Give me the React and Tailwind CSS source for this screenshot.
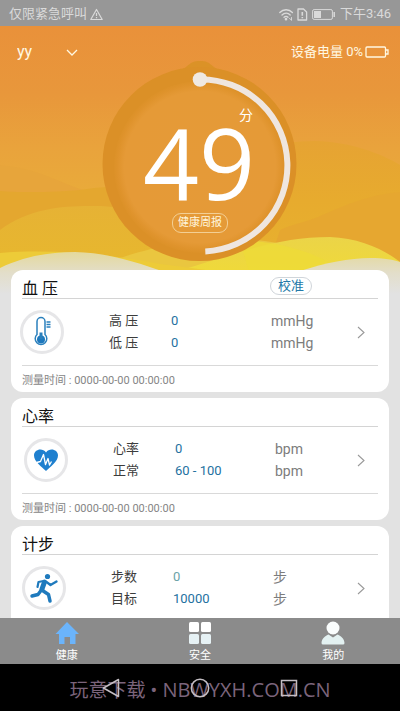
import React from "react";

function StatusBar() {
  return (
    <header className="flex h-[26px] shrink-0 items-center justify-between bg-[#979797] px-[9px] pt-[2px] text-[13px] leading-4 text-[#dadada]">
      <div className="flex items-center gap-[3px]">
        <span>仅限紧急呼叫</span>
        <svg width="13" height="13" viewBox="0 0 13 13" fill="none" stroke="currentColor" strokeWidth="1.2" strokeLinejoin="round">
          <path d="M6.500 1.500 L12.200 11.500 H0.800 Z" />
          <path d="M6.500 5 V8 M6.500 9 V10.200" />
        </svg>
      </div>
      <div className="flex items-center">
        <svg width="15" height="13" viewBox="0 0 15 13" fill="none" stroke="currentColor" strokeWidth="1.300" strokeLinecap="round">
          <path d="M0.800 4.500 C4.200 0.800 10 0.800 13.400 4.500" />
          <path d="M3 7 C5.400 4.500 8.900 4.500 11.200 7" />
          <path d="M5 9.300 C6.300 8 7.800 8 9 9.300" />
          <circle cx="7" cy="11.200" r="0.700" fill="currentColor" />
          <path d="M10.500 10.500 L12.500 12 M12.500 9.500 V12" strokeWidth="0.900" />
        </svg>
        <svg className="ml-[3px]" width="11" height="13" viewBox="0 0 11 13" fill="none" stroke="currentColor" strokeWidth="1.300" strokeLinejoin="round">
          <path d="M1 1 H6.500 L9.600 4 V12 H1 Z" />
          <path d="M5.300 4 V7.800 M5.300 9 V10.300" strokeWidth="1.600" />
        </svg>
        <svg className="ml-1" width="24" height="11" viewBox="0 0 24 11" fill="none" stroke="currentColor">
          <rect x="0.600" y="0.600" width="19.800" height="9.800" rx="1.500" />
          <rect x="2" y="2" width="7" height="7" fill="currentColor" stroke="none" />
          <path d="M22.200 3 V8" strokeWidth="1.500" />
        </svg>
        <span className="ml-1">下午3:46</span>
      </div>
    </header>
  );
}

function WaveBackground() {
  return (
    <svg className="absolute inset-x-0 top-0 h-[270px] w-full" viewBox="0 26 400 270" preserveAspectRatio="none" aria-hidden="true">
      <defs>
        <linearGradient id="sky" x1="0" y1="26" x2="0" y2="296" gradientUnits="userSpaceOnUse">
          <stop offset="0" stopColor="#e9913a" />
          <stop offset="0.250" stopColor="#e8973b" />
          <stop offset="0.450" stopColor="#e9a33c" />
          <stop offset="0.650" stopColor="#e9ac3a" />
          <stop offset="1" stopColor="#e8b62f" />
        </linearGradient>
        <linearGradient id="amber" x1="0" y1="141" x2="0" y2="260" gradientUnits="userSpaceOnUse">
          <stop offset="0" stopColor="#e6a333" />
          <stop offset="0.500" stopColor="#e7ab2e" />
          <stop offset="1" stopColor="#e8b12e" />
        </linearGradient>
        <linearGradient id="gold" x1="0" y1="205" x2="0" y2="260" gradientUnits="userSpaceOnUse">
          <stop offset="0" stopColor="#e6b235" />
          <stop offset="1" stopColor="#e7b72e" />
        </linearGradient>
        <linearGradient id="lemon" x1="0" y1="237" x2="0" y2="275" gradientUnits="userSpaceOnUse">
          <stop offset="0" stopColor="#ebd448" />
          <stop offset="1" stopColor="#f0da38" />
        </linearGradient>
        <linearGradient id="mist" x1="0" y1="252" x2="0" y2="294" gradientUnits="userSpaceOnUse">
          <stop offset="0" stopColor="#e4d99c" />
          <stop offset="0.500" stopColor="#e3deca" />
          <stop offset="1" stopColor="#e2e2e2" />
        </linearGradient>
      </defs>
      <rect y="26" width="400" height="270" fill="url(#sky)" />
      <path d="M0 165 C35 168 55 180 80 189 C120 202 180 205 220 205 V296 H0 Z" fill="#e7a53b" />
      <path d="M200 180 C240 150 280 141 315 141 C350 142 380 153 400 165 V296 H200 Z" fill="url(#amber)" />
      <path d="M0 191 C20 193 60 192 80 190 C100 187 115 186 130 186 C180 190 220 210 260 230 V296 H0 Z" fill="#e4a72f" />
      <path d="M400 192 C370 194 340 207 318 217 C305 222 290 225 280 230 L270 260 L300 296 H400 Z" fill="#e6a730" />
      <path d="M0 230 C28 209 60 206 90 206 C120 205 160 212 250 250 V296 H0 Z" fill="url(#gold)" />
      <path d="M115 260 C145 248 190 240 240 239 C280 240 320 252 340 270 H115 Z" fill="#eac63f" />
      <path d="M150 278 C220 262 265 237 330 237 C360 238 385 250 400 262 V296 H150 Z" fill="url(#lemon)" />
      <path d="M240 241 C270 240 310 250 335 266 L250 275 Z" fill="#eedc36" opacity="0.700" />
      <path d="M0 253 C50 249 110 254 160 264 C190 268 220 271 240 276 V296 H0 Z" fill="#edcb38" />
      <path d="M0 268 C25 256 50 252 75 252 C110 253 135 262 165 272 V296 H0 Z" fill="url(#mist)" />
      <path d="M300 271 C325 263 350 258 370 258 C384 258 394 260 400 262 V296 H300 Z" fill="url(#mist)" />
      <rect y="274" width="400" height="22" fill="url(#mist)" opacity="0.500" />
    </svg>
  );
}

function ScoreGauge() {
  return (
    <div className="mx-auto grid w-[200px] justify-items-center">
      <svg className="col-start-1 row-start-1" width="200" height="202" viewBox="100 60 200 202" aria-hidden="true">
        <defs>
          <radialGradient id="disc" cx="200" cy="167" r="86" gradientUnits="userSpaceOnUse">
            <stop offset="0" stopColor="#e59a38" />
            <stop offset="0.880" stopColor="#e59a37" />
            <stop offset="0.960" stopColor="#df932c" />
            <stop offset="1" stopColor="#dc9128" />
          </radialGradient>
        </defs>
        <path d="M180 70 C190 67 188 61 200 61 C212 61 210 67 220 70 L225 82 H175 Z" fill="#db9227" />
        <circle cx="199.500" cy="164" r="97" fill="#db9027" />
        <circle cx="200" cy="167" r="86" fill="url(#disc)" />
        <path d="M200 79.500 A86 86 0 0 1 205.300 251.400" fill="none" stroke="#efe6df" strokeWidth="6" />
        <circle cx="200" cy="79.500" r="7.300" fill="#efe9e2" />
      </svg>
      <div className="col-start-1 row-start-1 flex w-full flex-col items-center pt-[46px] text-white">
        <span className="w-full pr-[47px] text-right text-[14px] leading-[18px]">分</span>
        <strong className="pr-[2px] font-['Open_Sans'] text-[98px] font-normal leading-[76px]">49</strong>
        <button className="mt-[13px] h-5 w-14 rounded-[9px] border border-[#f3cf94] text-[11px] leading-[18px] text-[#fff6dd]">健康周报</button>
      </div>
    </div>
  );
}

function Hero() {
  return (
    <section className="h-[244px]">
      <div className="relative flex h-[38px] items-end justify-between pl-[17px] pr-[11px] text-[#fff8e2]">
        <label className="grid h-6 w-[61px] items-center">
          <span className="sr-only">用户</span>
          <select className="col-start-1 row-start-1 w-full appearance-none bg-transparent text-[16px] leading-5 outline-none">
            <option>yy</option>
          </select>
          <svg className="pointer-events-none col-start-1 row-start-1 justify-self-end" width="12" height="7" viewBox="0 0 12 7" fill="none" stroke="currentColor" strokeWidth="1.300">
            <path d="M1 1 L6 6 L11 1" />
          </svg>
        </label>
        <div className="flex h-6 items-center gap-[2px] text-[13px] leading-4">
          <span>设备电量 0%</span>
          <svg width="24" height="12" viewBox="0 0 24 12" fill="none" stroke="currentColor" strokeWidth="1.300">
            <rect x="1" y="1" width="19.500" height="10" rx="1" />
            <path d="M20.500 4 H23 V8 H20.500" />
          </svg>
        </div>
      </div>
      <div className="relative -mt-1">
        <ScoreGauge />
      </div>
    </section>
  );
}

function ThermometerIcon() {
  return (
    <svg width="18" height="32" viewBox="0 0 18 32" fill="none" stroke="#2a80bd" strokeWidth="1.500">
      <path d="M4 18.500 V5.500 A4 4 0 0 1 12 5.500 V18.500 A5.800 5.800 0 1 1 4 18.500 Z" />
      <circle cx="8" cy="23.500" r="4" fill="#1d78bd" stroke="none" />
      <path d="M8 23 V16.500" strokeWidth="3" />
      <path d="M13.500 6 H17.500 M13.500 8.500 H17.500 M13.500 11 H17.500" strokeWidth="1.300" />
    </svg>
  );
}

function HeartIcon() {
  return (
    <svg width="26" height="24" viewBox="0 0 26 24" fill="none">
      <path d="M13 23 C9 19 1 13.500 1 7.500 C1 1.300 9.500 -0.500 13 4.500 C16.500 -0.500 25 1.300 25 7.500 C25 13.500 17 19 13 23 Z" fill="#1f80cf" />
      <path d="M3.500 14.500 L7.500 13.500 L10.500 6.500 L12.500 16.500 L15 10.500 L16.500 17 L18.500 13.500" stroke="#fff" strokeWidth="1.300" strokeLinejoin="round" />
    </svg>
  );
}

function RunnerIcon() {
  return (
    <svg width="30" height="30" viewBox="0 0 30 30" fill="none" stroke="#1f7abd" strokeLinecap="round" strokeLinejoin="round">
      <circle cx="18.500" cy="3.500" r="2.600" fill="#1f7abd" stroke="none" />
      <path d="M15.500 9 L13 16" strokeWidth="5" />
      <path d="M14.500 8 L9.500 9 L8.500 14" strokeWidth="2.200" />
      <path d="M17.500 9 L21.500 12 L27.500 8.500" strokeWidth="2.400" />
      <path d="M12 17.500 L9 21.500 L3 23" strokeWidth="3.400" />
      <path d="M13.500 17.500 L19.500 21.500 L21 28" strokeWidth="3.400" />
    </svg>
  );
}

function MetricCard({ title, action, icon, inset, rows, measuredAt }) {
  return (
    <article className="rounded-[12px] bg-white">
      <div className="mx-[11px] flex h-[29px] items-center justify-between border-b border-[#d4d4d4] pt-1">
        <h2 className="pt-[6px] text-[16px] leading-5 text-[#111]">{title}</h2>
        {action && (
          <button className="mr-[66px] h-[18px] w-[42px] rounded-full border border-[#d0d5da] text-[13px] leading-4 text-[#2479a8]">
            {action}
          </button>
        )}
      </div>
      <div className={`flex h-[66px] items-center pr-6 ${inset}`}>
        <span className="flex size-11 shrink-0 items-center justify-center rounded-full border-[3px] border-[#e6e6e8]">{icon}</span>
        <dl className="ml-[45px] flex-1 leading-[22px]">
          {rows.map((row) => (
            <div key={row.label} className="flex">
              <dt className="w-[62px] text-[13px] text-[#3c3c3c]">{row.label}</dt>
              <dd className={`w-[100px] text-[13px] ${row.tone}`}>{row.value}</dd>
              <dd className="text-[14px] text-[#7c7c7c]">{row.unit}</dd>
            </div>
          ))}
        </dl>
        <button aria-label={title + " 详情"}>
          <svg width="8" height="13" viewBox="0 0 8 13" fill="none" stroke="#999" strokeWidth="1.100">
            <path d="M1 1 L7 6.500 L1 12" />
          </svg>
        </button>
      </div>
      <p className="mx-[11px] h-[27px] border-t border-[#d9d9d9] pt-[7px] text-[11px] leading-4 text-[#858585]">
        测量时间 : {measuredAt}
      </p>
    </article>
  );
}

const blue = "text-[#24719f]";

const metrics = [
  {
    title: "血 压",
    action: "校准",
    icon: <ThermometerIcon />,
    inset: "pl-[9px]",
    rows: [
      { label: "高 压", value: "0", unit: "mmHg", tone: blue },
      { label: "低 压", value: "0", unit: "mmHg", tone: blue },
    ],
  },
  {
    title: "心率",
    icon: <HeartIcon />,
    inset: "pl-[13px]",
    rows: [
      { label: "心率", value: "0", unit: "bpm", tone: blue },
      { label: "正常", value: "60 - 100", unit: "bpm", tone: blue },
    ],
  },
  {
    title: "计步",
    icon: <RunnerIcon />,
    inset: "pl-[11px]",
    rows: [
      { label: "步数", value: "0", unit: "步", tone: "text-[#6ba3a8]" },
      { label: "目标", value: "10000", unit: "步", tone: blue },
    ],
  },
];

function Tab({ label, children }) {
  return (
    <button className="flex flex-1 flex-col items-center pt-[3px] text-[11px] leading-4 text-white">
      {children}
      <span className="mt-[3px]">{label}</span>
    </button>
  );
}

function TabBar() {
  return (
    <nav className="flex h-[46px] shrink-0 bg-[#8b8b8b]">
      <Tab label="健康">
        <svg width="24" height="24" viewBox="0 0 24 24" fill="#6bb4fb">
          <path d="M12 1 L24 13 H20.500 V23 H15 V16 H9.500 V23 H4 V13 H0.500 Z" />
        </svg>
      </Tab>
      <Tab label="安全">
        <svg width="24" height="24" viewBox="0 0 24 24">
          <rect x="1" y="1" width="10" height="10" rx="1.500" fill="#fff" />
          <rect x="13" y="1" width="10" height="10" rx="1.500" fill="#fff" />
          <rect x="1" y="13" width="10" height="10" rx="1.500" fill="#e6f1f4" />
          <rect x="13" y="13" width="10" height="10" rx="1.500" fill="#e6f1f4" />
        </svg>
      </Tab>
      <Tab label="我的">
        <svg width="24" height="24" viewBox="0 0 24 24">
          <circle cx="12" cy="7" r="6.500" fill="#fafdfd" />
          <path d="M0.500 22 C0.800 17 4.500 15 7.500 13.500 L12 16.500 L16.500 13.500 C19.500 15 23.200 17 23.500 22 Q23.500 23.500 22 23.500 H2 Q0.500 23.500 0.500 22 Z" fill="#e3f1f1" />
        </svg>
      </Tab>
    </nav>
  );
}

function SystemNav() {
  return (
    <footer className="relative h-[47px] shrink-0 bg-black">
      <p className="absolute inset-0 flex items-center justify-center whitespace-pre pt-1 font-['Open_Sans','Noto_Sans_CJK_SC',sans-serif] text-[20px] leading-6 text-[#7b647b]">
        <span className="text-[19px]">玩意下载 • </span>NBWYXH.COM.CN
      </p>
      <div className="relative flex h-full items-center justify-center gap-[69px]">
        <button aria-label="返回">
          <svg width="20" height="20" viewBox="0 0 20 20" fill="none" stroke="#c4bec4" strokeWidth="1.500" strokeLinejoin="round">
            <path d="M2.500 10 L17.500 1.500 V18.500 Z" />
          </svg>
        </button>
        <button aria-label="主页">
          <svg width="20" height="20" viewBox="0 0 20 20" fill="none" stroke="#c4bec4" strokeWidth="1.500">
            <circle cx="10" cy="10" r="8.700" />
          </svg>
        </button>
        <button aria-label="最近">
          <svg width="20" height="20" viewBox="0 0 20 20" fill="none" stroke="#c4bec4" strokeWidth="1.500">
            <rect x="2.500" y="2.500" width="15" height="15" />
          </svg>
        </button>
      </div>
    </footer>
  );
}

export default function App() {
  return (
    <div className="flex h-screen flex-col bg-[#e2e2e2] font-[Roboto,'Noto_Sans_CJK_SC',sans-serif]">
      <StatusBar />
      <main className="relative min-h-0 flex-1 overflow-hidden">
        <WaveBackground />
        <Hero />
        <div className="relative flex flex-col gap-[6px] px-[11px]">
          {metrics.map((metric) => (
            <MetricCard key={metric.title} {...metric} measuredAt="0000-00-00 00:00:00" />
          ))}
        </div>
      </main>
      <TabBar />
      <SystemNav />
    </div>
  );
}
